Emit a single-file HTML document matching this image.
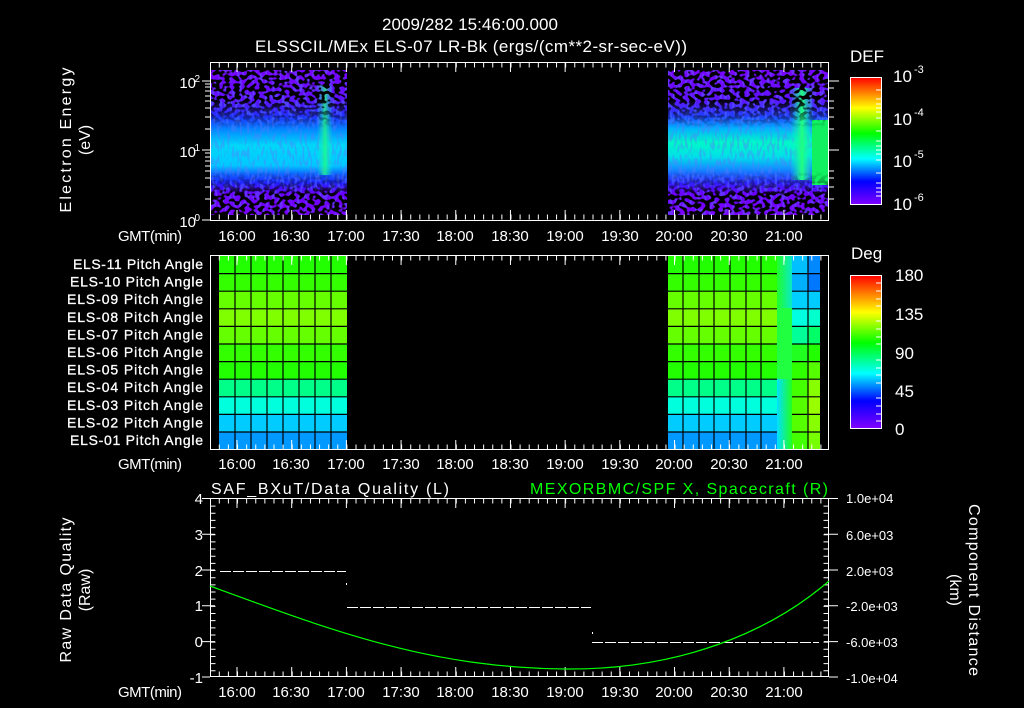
<!DOCTYPE html>
<html><head><meta charset="utf-8"><style>
html,body{margin:0;padding:0;background:#000;width:1024px;height:708px;overflow:hidden}
svg{display:block}
text{font-family:"Liberation Sans",sans-serif;fill:#fff}
</style></head><body>
<svg width="1024" height="708" viewBox="0 0 1024 708" xmlns="http://www.w3.org/2000/svg">
<defs>
<filter id="spk" x="0" y="0" width="1" height="1">
<feTurbulence type="fractalNoise" baseFrequency="0.2 0.25" numOctaves="1" seed="7"/>
<feColorMatrix type="matrix" values="0 0 0 0 0 0 0 0 0 0 0 0 0 0 0 14 0 0 0 -6.6"/>
</filter>
<filter id="spk2" x="0" y="0" width="1" height="1">
<feTurbulence type="fractalNoise" baseFrequency="0.4 0.12" numOctaves="1" seed="21"/>
<feColorMatrix type="matrix" values="0 0 0 0 0.1 0 0 0 0 0.2 0 0 0 0 1 10 0 0 0 -5"/>
</filter>
<linearGradient id="band" x1="0" y1="70" x2="0" y2="215" gradientUnits="userSpaceOnUse">
<stop offset="0" stop-color="#7a00ff"/><stop offset="0.2" stop-color="#6010ff"/>
<stop offset="0.32" stop-color="#2030ff"/><stop offset="0.42" stop-color="#0090ff"/>
<stop offset="0.52" stop-color="#00d8f8"/><stop offset="0.66" stop-color="#00c8ff"/>
<stop offset="0.72" stop-color="#1060ff"/><stop offset="0.78" stop-color="#2020ff"/>
<stop offset="0.85" stop-color="#6a00ff"/><stop offset="1" stop-color="#7a00ff"/>
</linearGradient>
<linearGradient id="band2" x1="0" y1="70" x2="0" y2="215" gradientUnits="userSpaceOnUse">
<stop offset="0" stop-color="#7a00ff"/><stop offset="0.2" stop-color="#6010ff"/>
<stop offset="0.32" stop-color="#2040ff"/><stop offset="0.4" stop-color="#00b0ff"/>
<stop offset="0.5" stop-color="#00f8c8"/><stop offset="0.6" stop-color="#00e0e8"/>
<stop offset="0.68" stop-color="#1090ff"/><stop offset="0.78" stop-color="#3020ff"/>
<stop offset="0.85" stop-color="#6a00ff"/><stop offset="1" stop-color="#7a00ff"/>
</linearGradient>
<linearGradient id="mk" x1="0" y1="70" x2="0" y2="215" gradientUnits="userSpaceOnUse">
<stop offset="0" stop-color="#fff"/><stop offset="0.2" stop-color="#fff"/>
<stop offset="0.33" stop-color="#555"/><stop offset="0.4" stop-color="#000"/>
<stop offset="0.7" stop-color="#000"/><stop offset="0.8" stop-color="#666"/>
<stop offset="0.86" stop-color="#fff"/><stop offset="1" stop-color="#fff"/>
</linearGradient>
<mask id="m" maskUnits="userSpaceOnUse" x="0" y="0" width="1024" height="300"><rect x="0" y="60" width="1024" height="170" fill="url(#mk)"/></mask>
<linearGradient id="rb" x1="0" y1="1" x2="0" y2="0">
<stop offset="0" stop-color="#8000ff"/><stop offset="0.18" stop-color="#0000ff"/>
<stop offset="0.36" stop-color="#00ffff"/><stop offset="0.56" stop-color="#00ff00"/>
<stop offset="0.76" stop-color="#ffff00"/><stop offset="0.88" stop-color="#ff8000"/>
<stop offset="1" stop-color="#ff0000"/>
</linearGradient>
<linearGradient id="spike" x1="0" y1="0" x2="1" y2="0">
<stop offset="0" stop-color="#00ffc0" stop-opacity="0"/><stop offset="0.5" stop-color="#20ff80"/><stop offset="1" stop-color="#00ffc0" stop-opacity="0"/>
</linearGradient>
<linearGradient id="cg" x1="0" y1="0" x2="1" y2="0">
<stop offset="0" stop-color="#20ff20"/><stop offset="1" stop-color="#00e0ff"/>
</linearGradient>
</defs>

<text x="470" y="30" font-size="17" text-anchor="middle" textLength="176">2009/282 15:46:00.000</text>
<text x="471" y="52" font-size="17" text-anchor="middle" textLength="432">ELSSCIL/MEx ELS-07 LR-Bk  (ergs/(cm**2-sr-sec-eV))</text>

<rect x="211" y="70" width="136" height="145" fill="url(#band)"/>
<rect x="668" y="70" width="160" height="145" fill="url(#band2)"/>
<rect x="211" y="70" width="136" height="145" filter="url(#spk2)" opacity="0.4"/>
<rect x="668" y="70" width="160" height="145" filter="url(#spk2)" opacity="0.4"/>
<rect x="317" y="85" width="16" height="90" fill="url(#spike)" opacity="0.8"/>
<rect x="790" y="88" width="24" height="92" fill="url(#spike)"/>
<rect x="812" y="120" width="16" height="65" fill="#10f060"/>
<g mask="url(#m)"><rect x="211" y="70" width="136" height="145" fill="#000" filter="url(#spk)"/><rect x="668" y="70" width="160" height="145" fill="#000" filter="url(#spk)"/></g>

<g stroke="#fff" fill="none">
<rect x="210.5" y="62.5" width="618" height="158"/>
<line x1="218.8" y1="65" x2="829" y2="65" stroke-width="5" stroke-dasharray="1 8.115"/>
<line x1="218.8" y1="217" x2="829" y2="217" stroke-width="5" stroke-dasharray="1 8.115"/>
<line x1="236.5" y1="67" x2="829" y2="67" stroke-width="10" stroke-dasharray="1 53.69"/>
<line x1="236.5" y1="215" x2="829" y2="215" stroke-width="10" stroke-dasharray="1 53.69"/>
<path d="M202 81H210M202 150H210M202 220H210M205 199H210M205 187H210M205 178H210M205 171H210M205 166H210M205 161H210M205 157H210M205 153H210M205 129H210M205 117H210M205 108H210M205 101H210M205 96H210M205 91H210M205 87H210M205 84H210"/>
<path d="M829 81H839M829 150H839M829 199H834M829 187H834M829 178H834M829 171H834M829 129H834M829 117H834M829 108H834M829 101H834M829 88H834"/>
</g>
<g font-size="15" text-anchor="end">
<text x="196" y="88">10</text><text x="200" y="82" font-size="10">2</text>
<text x="196" y="157">10</text><text x="200" y="151" font-size="10">1</text>
<text x="196" y="227">10</text><text x="200" y="221" font-size="10">0</text>
</g>
<text font-size="16" text-anchor="middle" transform="translate(71,140) rotate(-90)" textLength="145">Electron Energy</text>
<text font-size="16" text-anchor="middle" transform="translate(90,140) rotate(-90)">(eV)</text>

<g font-size="15" text-anchor="middle">
<text x="150" y="241" textLength="64">GMT(min)</text>
<text x="237" y="241">16:00</text><text x="291" y="241">16:30</text><text x="346" y="241">17:00</text><text x="401" y="241">17:30</text><text x="455" y="241">18:00</text><text x="510" y="241">18:30</text><text x="565" y="241">19:00</text><text x="620" y="241">19:30</text><text x="674" y="241">20:00</text><text x="729" y="241">20:30</text><text x="784" y="241">21:00</text>
</g>

<text x="850" y="62" font-size="17">DEF</text>
<rect x="850.5" y="77.5" width="31" height="127" fill="url(#rb)" stroke="#fff"/>
<g stroke="#fff"><path d="M876 90H882M876 99H882M876 104H882M876 108H882M876 112H882M876 118H882M876 131H882M876 141H882M876 146H882M876 150H882M876 154H882M876 160H882M876 173H882M876 183H882M876 188H882M876 192H882M876 196H882"/></g>
<g font-size="17"><text x="893" y="82">10</text><text x="914" y="73" font-size="11">-3</text>
<text x="893" y="125">10</text><text x="914" y="116" font-size="11">-4</text>
<text x="893" y="167">10</text><text x="914" y="158" font-size="11">-5</text>
<text x="893" y="210">10</text><text x="914" y="201" font-size="11">-6</text></g>

<g>
<rect x="219" y="256" width="128" height="17.6" fill="#22ff00"/>
<rect x="219" y="273.6" width="128" height="17.6" fill="#33ff00"/>
<rect x="219" y="291.2" width="128" height="17.6" fill="#66ff00"/>
<rect x="219" y="308.8" width="128" height="17.6" fill="#80ff00"/>
<rect x="219" y="326.4" width="128" height="17.6" fill="#66ff00"/>
<rect x="219" y="344" width="128" height="17.6" fill="#33ff00"/>
<rect x="219" y="361.6" width="128" height="17.6" fill="#22ff00"/>
<rect x="219" y="379.2" width="128" height="17.6" fill="#00ff88"/>
<rect x="219" y="396.8" width="128" height="17.6" fill="#00ffdd"/>
<rect x="219" y="414.4" width="128" height="17.6" fill="#00ccff"/>
<rect x="219" y="432" width="128" height="17.6" fill="#0099ff"/>

<rect x="668" y="256" width="109" height="17.6" fill="#22ff00"/>
<rect x="668" y="273.6" width="109" height="17.6" fill="#33ff00"/>
<rect x="668" y="291.2" width="109" height="17.6" fill="#66ff00"/>
<rect x="668" y="308.8" width="109" height="17.6" fill="#80ff00"/>
<rect x="668" y="326.4" width="109" height="17.6" fill="#66ff00"/>
<rect x="668" y="344" width="109" height="17.6" fill="#33ff00"/>
<rect x="668" y="361.6" width="109" height="17.6" fill="#22ff00"/>
<rect x="668" y="379.2" width="109" height="17.6" fill="#00ff88"/>
<rect x="668" y="396.8" width="109" height="17.6" fill="#00ffdd"/>
<rect x="668" y="414.4" width="109" height="17.6" fill="#00ccff"/>
<rect x="668" y="432" width="109" height="17.6" fill="#0099ff"/>

<rect x="777" y="256" width="15" height="193.6" fill="#20ff40"/>
<rect x="777" y="256" width="15" height="52" fill="url(#cg)" opacity="0.7"/>
<rect x="777" y="379" width="15" height="70" fill="url(#cg)" transform="translate(1569,0) scale(-1,1)"/>

<rect x="792" y="256" width="16" height="17.6" fill="#00c0ff"/>
<rect x="792" y="273.6" width="16" height="17.6" fill="#00b0ff"/>
<rect x="792" y="291.2" width="16" height="17.6" fill="#00d0ff"/>
<rect x="792" y="308.8" width="16" height="17.6" fill="#00ffe0"/>
<rect x="792" y="326.4" width="16" height="17.6" fill="#00ff99"/>
<rect x="792" y="344" width="16" height="17.6" fill="#20ff20"/>
<rect x="792" y="361.6" width="16" height="17.6" fill="#30ff00"/>
<rect x="792" y="379.2" width="16" height="17.6" fill="#44ff00"/>
<rect x="792" y="396.8" width="16" height="17.6" fill="#55ff00"/>
<rect x="792" y="414.4" width="16" height="17.6" fill="#55ff00"/>
<rect x="792" y="432" width="16" height="17.6" fill="#44ff00"/>

<rect x="808" y="256" width="12" height="17.6" fill="#0088ff"/>
<rect x="808" y="273.6" width="12" height="17.6" fill="#0077ff"/>
<rect x="808" y="291.2" width="12" height="17.6" fill="#00ccff"/>
<rect x="808" y="308.8" width="12" height="17.6" fill="#00ffcc"/>
<rect x="808" y="326.4" width="12" height="17.6" fill="#00ff66"/>
<rect x="808" y="344" width="12" height="17.6" fill="#22ff00"/>
<rect x="808" y="361.6" width="12" height="17.6" fill="#55ff00"/>
<rect x="808" y="379.2" width="12" height="17.6" fill="#88ff00"/>
<rect x="808" y="396.8" width="12" height="17.6" fill="#99ff00"/>
<rect x="808" y="414.4" width="12" height="17.6" fill="#88ff00"/>
<rect x="808" y="432" width="12" height="17.6" fill="#77ff00"/>
</g>
<g stroke="#000" stroke-width="1.2">
<path d="M219 273.6H347M219 291.2H347M219 308.8H347M219 326.4H347M219 344H347M219 361.6H347M219 379.2H347M219 396.8H347M219 414.4H347M219 432H347"/>
<path d="M235 256V449M251 256V449M267 256V449M283 256V449M299 256V449M315 256V449M331 256V449"/>
<path d="M668 273.6H777M668 291.2H777M668 308.8H777M668 326.4H777M668 344H777M668 361.6H777M668 379.2H777M668 396.8H777M668 414.4H777M668 432H777"/>
<path d="M792 273.6H820M792 291.2H820M792 308.8H820M792 326.4H820M792 344H820M792 361.6H820M792 379.2H820M792 396.8H820M792 414.4H820M792 432H820"/>
<path d="M683 256V449M699 256V449M714 256V449M730 256V449M746 256V449M761 256V449M808 256V449"/>
</g>
<g stroke="#fff" fill="none">
<rect x="210.5" y="255.5" width="618" height="194"/>
<line x1="218.8" y1="258" x2="829" y2="258" stroke-width="5" stroke-dasharray="1 8.115"/>
<line x1="218.8" y1="447" x2="829" y2="447" stroke-width="5" stroke-dasharray="1 8.115"/>
<line x1="236.5" y1="260" x2="829" y2="260" stroke-width="10" stroke-dasharray="1 53.69"/>
<line x1="236.5" y1="445" x2="829" y2="445" stroke-width="10" stroke-dasharray="1 53.69"/>
</g>
<g font-size="14" text-anchor="end" stroke="#fff" stroke-width="0.3">
<text x="203" y="269" textLength="130">ELS-11 Pitch Angle</text>
<text x="203" y="286.6" textLength="133">ELS-10 Pitch Angle</text>
<text x="203" y="304.2" textLength="136">ELS-09 Pitch Angle</text>
<text x="203" y="321.8" textLength="136">ELS-08 Pitch Angle</text>
<text x="203" y="339.4" textLength="136">ELS-07 Pitch Angle</text>
<text x="203" y="357" textLength="136">ELS-06 Pitch Angle</text>
<text x="203" y="374.6" textLength="136">ELS-05 Pitch Angle</text>
<text x="203" y="392.2" textLength="136">ELS-04 Pitch Angle</text>
<text x="203" y="409.8" textLength="136">ELS-03 Pitch Angle</text>
<text x="203" y="427.4" textLength="136">ELS-02 Pitch Angle</text>
<text x="203" y="445" textLength="133">ELS-01 Pitch Angle</text>
</g>
<g font-size="15" text-anchor="middle">
<text x="150" y="469" textLength="64">GMT(min)</text>
<text x="237" y="469">16:00</text><text x="291" y="469">16:30</text><text x="346" y="469">17:00</text><text x="401" y="469">17:30</text><text x="455" y="469">18:00</text><text x="510" y="469">18:30</text><text x="565" y="469">19:00</text><text x="620" y="469">19:30</text><text x="674" y="469">20:00</text><text x="729" y="469">20:30</text><text x="784" y="469">21:00</text>
</g>

<text x="851" y="259" font-size="17">Deg</text>
<rect x="850.5" y="275.5" width="31" height="153" fill="url(#rb)" stroke="#fff"/>
<g stroke="#fff"><path d="M876 283H882M876 291H882M876 299H882M876 306H882M876 321H882M876 329H882M876 337H882M876 344H882M876 360H882M876 368H882M876 375H882M876 383H882M876 398H882M876 406H882M876 414H882M876 421H882"/></g>
<g font-size="17"><text x="895" y="281">180</text><text x="895" y="320">135</text><text x="895" y="359">90</text><text x="895" y="397">45</text><text x="895" y="435">0</text></g>

<text x="211" y="494" font-size="16" textLength="238">SAF_BXuT/Data Quality (L)</text>
<text x="828" y="494" font-size="16" text-anchor="end" textLength="298" style="fill:#00ff00">MEXORBMC/SPF X, Spacecraft (R)</text>
<g stroke="#fff" fill="none">
<rect x="210.5" y="498.5" width="618" height="178"/>
<line x1="218.8" y1="501" x2="829" y2="501" stroke-width="5" stroke-dasharray="1 8.115"/>
<line x1="218.8" y1="674" x2="829" y2="674" stroke-width="5" stroke-dasharray="1 8.115"/>
<line x1="236.5" y1="503" x2="829" y2="503" stroke-width="10" stroke-dasharray="1 53.69"/>
<line x1="236.5" y1="672" x2="829" y2="672" stroke-width="10" stroke-dasharray="1 53.69"/>
<line x1="213" y1="505.6" x2="213" y2="677" stroke-width="5" stroke-dasharray="1 6.16"/>
<path d="M202 498.5H210M202 534.3H215M202 570H215M202 605.8H215M202 641.6H215M202 677H210"/>
<line x1="826" y1="505.6" x2="826" y2="677" stroke-width="5" stroke-dasharray="1 6.16"/>
<path d="M829 498.5H838M824 534.3H838M824 570H838M824 605.8H838M824 641.6H838M829 677H838"/>
</g>
<g stroke="#fff" stroke-dasharray="11 2" fill="none">
<path d="M220 571.5H346M347 607.5H591M592 642.5H819"/>
</g>
<rect x="346" y="583" width="1" height="2" fill="#fff"/><rect x="592" y="632" width="1" height="2" fill="#fff"/>
<path fill="none" stroke="#00ff00" stroke-width="1.2" d="M210 586 C 330 630, 430 668, 565 669 C 680 670, 770 632, 829 581"/>
<g font-size="15" text-anchor="end">
<text x="203" y="504">4</text><text x="203" y="540">3</text><text x="203" y="576">2</text><text x="203" y="611">1</text><text x="203" y="647">0</text><text x="203" y="683">-1</text>
</g>
<g font-size="13">
<text x="846" y="503">1.0e+04</text><text x="846" y="540">6.0e+03</text><text x="846" y="576">2.0e+03</text><text x="846" y="611">-2.0e+03</text><text x="846" y="647">-6.0e+03</text><text x="846" y="683">-1.0e+04</text>
</g>
<text font-size="16" text-anchor="middle" transform="translate(71,590) rotate(-90)" textLength="145">Raw Data Quality</text>
<text font-size="16" text-anchor="middle" transform="translate(90,590) rotate(-90)">(Raw)</text>
<text font-size="16" text-anchor="middle" transform="translate(969,590) rotate(90)" textLength="172">Component Distance</text>
<text font-size="16" text-anchor="middle" transform="translate(950,590) rotate(90)">(km)</text>
<g font-size="15" text-anchor="middle">
<text x="150" y="697" textLength="64">GMT(min)</text>
<text x="237" y="697">16:00</text><text x="291" y="697">16:30</text><text x="346" y="697">17:00</text><text x="401" y="697">17:30</text><text x="455" y="697">18:00</text><text x="510" y="697">18:30</text><text x="565" y="697">19:00</text><text x="620" y="697">19:30</text><text x="674" y="697">20:00</text><text x="729" y="697">20:30</text><text x="784" y="697">21:00</text>
</g>
</svg>
</body></html>
